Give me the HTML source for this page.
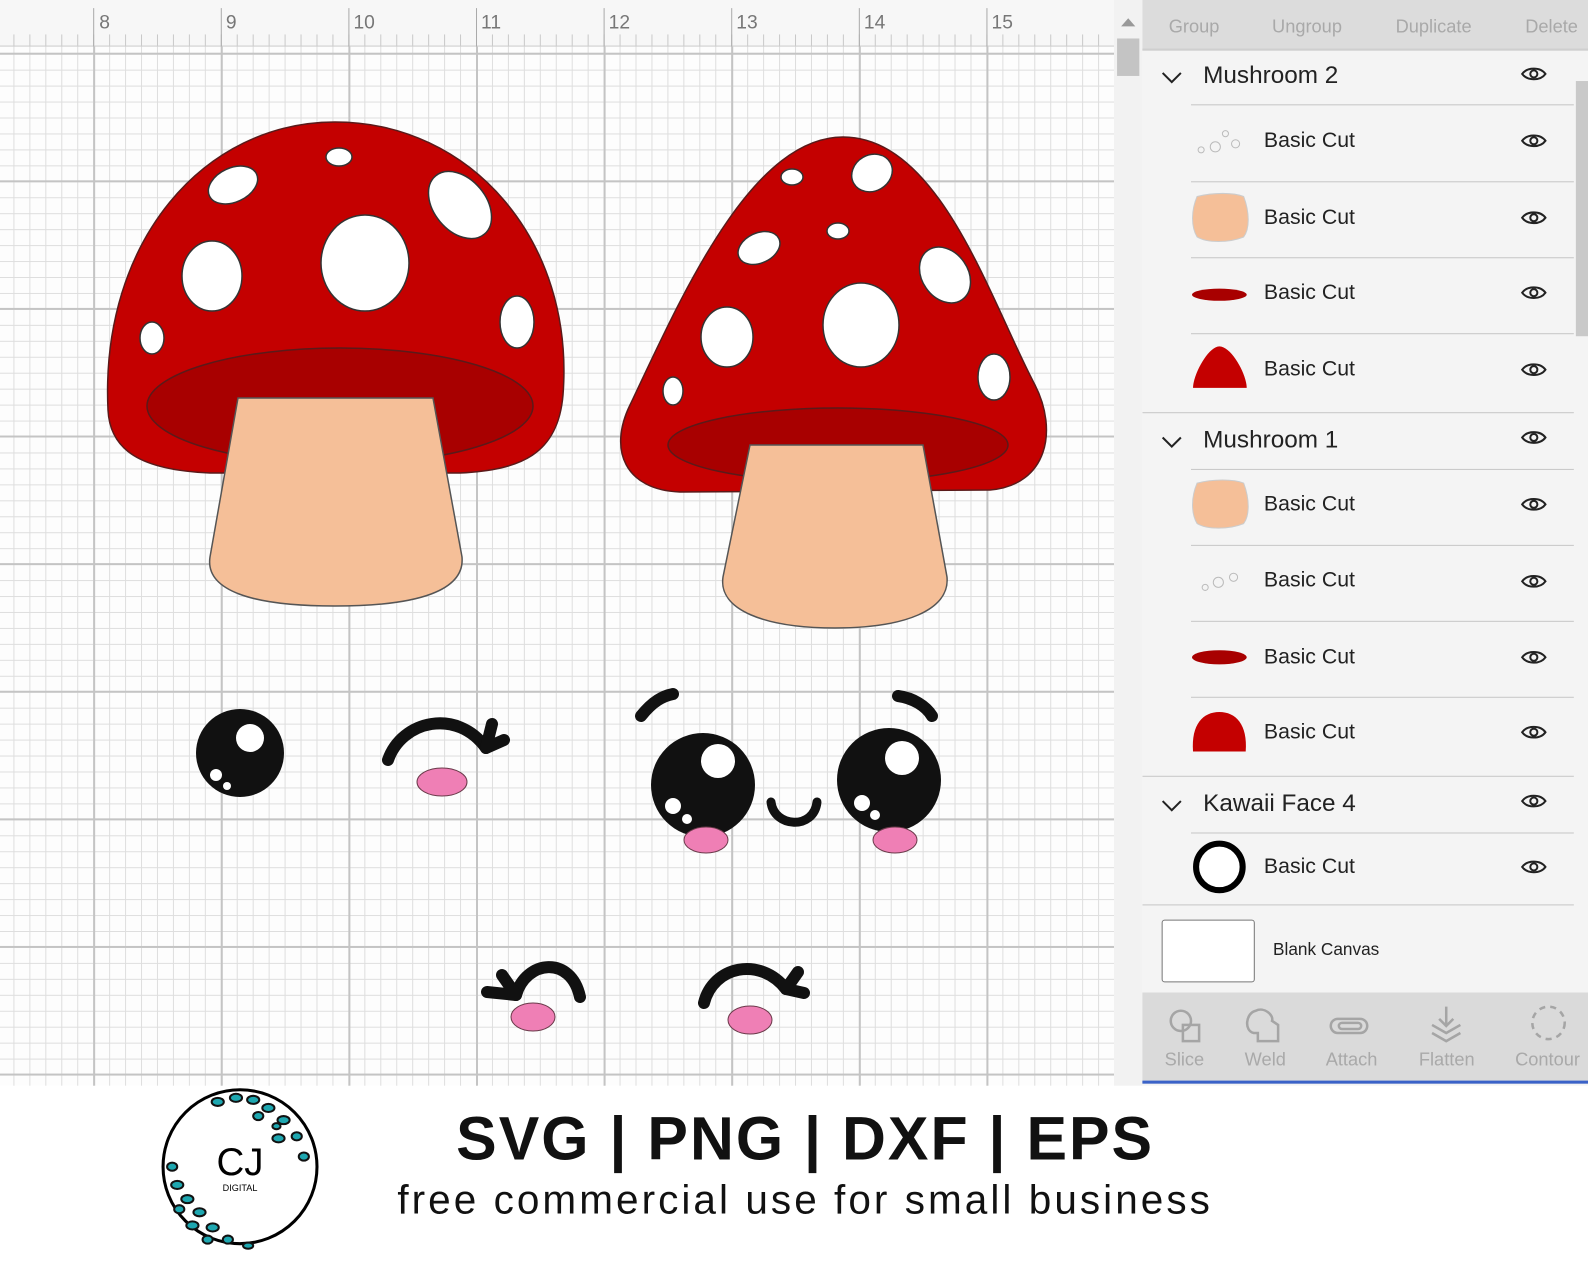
<!DOCTYPE html>
<html><head><meta charset="utf-8"><style>
*{margin:0;padding:0;box-sizing:border-box}
body{width:1588px;height:1270px;overflow:hidden;background:#fff;font-family:"Liberation Sans",sans-serif;position:relative}
#wrap{position:absolute;left:0;top:0;width:1568px;height:1254px;transform:scale(1.01276);transform-origin:0 0}
#canvas{position:absolute;left:0;top:0;width:1100px;height:1072px;background-color:#fdfdfd;
background-image:
linear-gradient(90deg,#c4c4c4 0 2px,transparent 2px),
linear-gradient(0deg,#c4c4c4 0 2px,transparent 2px),
linear-gradient(90deg,#dedede 0 1px,transparent 1px),
linear-gradient(0deg,#dedede 0 1px,transparent 1px);
background-size:126px 126px,126px 126px,15.75px 15.75px,15.75px 15.75px;
background-position:92px 54px,92px 54px,92px 54px,92px 54px}
#ruler{position:absolute;left:0;top:0;width:1100px;height:46px;background:#f7f7f7;border-bottom:1px solid #ccc;
background-image:linear-gradient(90deg,#c8c8c8 0 1px,transparent 1px);background-size:15.75px 12px;background-repeat:repeat-x;background-position:92px 34px}
#ruler span{position:absolute;top:12px;font-size:19px;color:#777}
#ruler i{position:absolute;top:8px;width:1px;height:38px;background:#aaa}
#vs{position:absolute;left:1100px;top:0;width:28px;height:1072px;background:#f2f2f2}
#panel{position:absolute;left:1128px;top:0;width:440px;height:1072px;background:#f4f4f4}
.tb{position:absolute;left:0;top:0;width:440px;height:50px;background:#dcdcdc;border-bottom:2px solid #cfcfcf}
.tb span,.bb span{position:absolute;font-size:18px;color:#a9a9a9}
.hd{font-size:24px;color:#222;position:absolute;left:60px}
.bc{font-size:21px;color:#222;position:absolute;left:120px}
.bb{position:absolute;left:0;top:980px;width:440px;height:90px;background:#dadada;border-bottom:3px solid #3a62c8}
</style></head><body><div id="wrap">
<div id="canvas"></div>
<div id="ruler">
<i style="left:92px"></i><span style="left:98px">8</span>
<i style="left:218px"></i><span style="left:223px">9</span>
<i style="left:344px"></i><span style="left:349px">10</span>
<i style="left:470px"></i><span style="left:475px">11</span>
<i style="left:596px"></i><span style="left:601px">12</span>
<i style="left:722px"></i><span style="left:727px">13</span>
<i style="left:848px"></i><span style="left:853px">14</span>
<i style="left:974px"></i><span style="left:979px">15</span>
</div>
<div id="vs"><div style="position:absolute;left:7px;top:18px;border-left:7px solid transparent;border-right:7px solid transparent;border-bottom:8px solid #999"></div><div style="position:absolute;left:3px;top:38px;width:22px;height:37px;background:#c4c4c4"></div></div>

<div id="panel">
<div class="tb">
<span style="left:26px;top:16px">Group</span>
<span style="left:128px;top:16px">Ungroup</span>
<span style="left:250px;top:16px">Duplicate</span>
<span style="left:378px;top:16px">Delete</span>
</div>
<svg style="position:absolute;left:0;top:0" width="440" height="1072">
<defs><g id="e"><path d="M375 0 C380 -7 393 -7 398 0 C393 7 380 7 375 0 Z"/><circle cx="386.5" cy="0" r="3.5"/></g></defs>
<g fill="none" stroke="#222" stroke-width="2">
<path d="M20 72 L29 81 L38 72"/><path d="M20 432 L29 441 L38 432"/><path d="M20 791 L29 800 L38 791"/>
<use href="#e" y="73"/><use href="#e" y="139"/><use href="#e" y="215"/><use href="#e" y="289"/><use href="#e" y="365"/>
<use href="#e" y="432"/><use href="#e" y="498"/><use href="#e" y="574"/><use href="#e" y="649"/><use href="#e" y="723"/>
<use href="#e" y="791"/><use href="#e" y="856"/>
</g>
<g fill="none" stroke="#bbb"><circle cx="72" cy="145" r="5"/><circle cx="82" cy="132" r="3"/><circle cx="58" cy="148" r="3"/><circle cx="92" cy="142" r="4"/><circle cx="62" cy="580" r="3"/><circle cx="75" cy="575" r="5"/><circle cx="90" cy="570" r="4"/></g>
<path d="M54 194 C70 190 90 190 100 194 C106 210 106 226 100 234 C85 240 64 240 54 234 C48 224 48 208 54 194 Z" fill="#f5bf98" stroke="#ccc"/>
<path d="M54 477 C70 473 90 473 100 477 C106 493 106 509 100 517 C85 523 64 523 54 517 C48 507 48 491 54 477 Z" fill="#f5bf98" stroke="#ccc"/>
<ellipse cx="76" cy="291" rx="27" ry="6" fill="#a80000"/>
<ellipse cx="76" cy="649" rx="27" ry="7" fill="#a80000"/>
<path d="M50 383 C50 370 65 342 76 342 C88 342 103 370 103 383 Z" fill="#c40000"/>
<path d="M50 742 C48 715 60 703 76 703 C92 703 104 715 102 742 Z" fill="#c40000"/>
<circle cx="76" cy="856" r="23" fill="#fff" stroke="#000" stroke-width="6"/>
<g fill="#c6c6c6">
<rect x="48" y="103" width="378" height="1"/><rect x="48" y="179" width="378" height="1"/><rect x="48" y="254" width="378" height="1"/><rect x="48" y="329" width="378" height="1"/>
<rect x="0" y="407" width="426" height="1"/><rect x="48" y="463" width="378" height="1"/><rect x="48" y="538" width="378" height="1"/><rect x="48" y="613" width="378" height="1"/><rect x="48" y="688" width="378" height="1"/>
<rect x="0" y="766" width="426" height="1"/><rect x="48" y="822" width="378" height="1"/><rect x="0" y="893" width="426" height="1"/>
</g>
<rect x="428" y="80" width="12" height="252" fill="#c9c9c9"/>
</svg>
<div class="hd" style="top:61px">Mushroom 2</div>
<div class="bc" style="top:127px">Basic Cut</div>
<div class="bc" style="top:203px">Basic Cut</div>
<div class="bc" style="top:277px">Basic Cut</div>
<div class="bc" style="top:353px">Basic Cut</div>
<div class="hd" style="top:421px">Mushroom 1</div>
<div class="bc" style="top:486px">Basic Cut</div>
<div class="bc" style="top:561px">Basic Cut</div>
<div class="bc" style="top:637px">Basic Cut</div>
<div class="bc" style="top:711px">Basic Cut</div>
<div class="hd" style="top:780px">Kawaii Face 4</div>
<div class="bc" style="top:844px">Basic Cut</div>
<div style="position:absolute;left:19px;top:908px;width:92px;height:62px;background:#fff;border:1px solid #777;border-radius:3px"></div>
<div style="position:absolute;left:129px;top:928px;font-size:17px;color:#222">Blank Canvas</div>
<div class="bb">
<svg style="position:absolute;left:0;top:0" width="440" height="60"><g fill="none" stroke="#a5a5a5" stroke-width="2.5">
<circle cx="38" cy="28" r="10"/><rect x="40" y="32" width="16" height="16"/>
<path d="M110 40 C100 38 102 20 112 18 C120 14 130 22 128 28 L134 32 L134 48 L114 48 L114 40 Z"/>
<rect x="186" y="26" width="36" height="14" rx="7"/><rect x="194" y="30" width="22" height="6" rx="3"/>
<path d="M300 14 L300 32 M293 26 L300 33 L307 26 M286 32 L300 40 L314 32 M286 40 L300 48 L314 40"/>
<circle cx="401" cy="30" r="16" stroke-dasharray="6 5"/>
</g></svg>
<span style="left:22px;top:56px">Slice</span>
<span style="left:101px;top:56px">Weld</span>
<span style="left:181px;top:56px">Attach</span>
<span style="left:273px;top:56px">Flatten</span>
<span style="left:368px;top:56px">Contour</span>
</div>
</div>

<svg style="position:absolute;left:155px;top:1072px" width="165" height="165" viewBox="0 0 165 165">
<circle cx="82" cy="80" r="76" fill="#fff" stroke="#000" stroke-width="3"/>
<g fill="#1ea7b0" stroke="#111" stroke-width="2">
<ellipse cx="60" cy="16" rx="6" ry="4"/><ellipse cx="78" cy="12" rx="6" ry="4"/><ellipse cx="95" cy="14" rx="6" ry="4"/><ellipse cx="110" cy="22" rx="6" ry="4"/><ellipse cx="125" cy="34" rx="6" ry="4"/><ellipse cx="100" cy="30" rx="5" ry="4"/><ellipse cx="120" cy="52" rx="6" ry="4"/><ellipse cx="138" cy="50" rx="5" ry="4"/><ellipse cx="145" cy="70" rx="5" ry="4"/><ellipse cx="118" cy="40" rx="4" ry="3"/>
<ellipse cx="15" cy="80" rx="5" ry="4"/><ellipse cx="20" cy="98" rx="6" ry="4"/><ellipse cx="30" cy="112" rx="6" ry="4"/><ellipse cx="22" cy="122" rx="5" ry="4"/><ellipse cx="42" cy="125" rx="6" ry="4"/><ellipse cx="35" cy="138" rx="6" ry="4"/><ellipse cx="55" cy="140" rx="6" ry="4"/><ellipse cx="50" cy="152" rx="5" ry="4"/><ellipse cx="70" cy="152" rx="5" ry="4"/><ellipse cx="90" cy="158" rx="5" ry="3"/>
</g>
<text x="82" y="88" text-anchor="middle" font-family="Liberation Sans" font-size="38" fill="#000">CJ</text>
<text x="82" y="104" text-anchor="middle" font-family="Liberation Sans" font-size="9" fill="#000">DIGITAL</text>
</svg>
<div style="position:absolute;left:380px;top:1090px;width:830px;text-align:center;font-size:60px;font-weight:bold;color:#111;letter-spacing:2px">SVG | PNG | DXF | EPS</div>
<div style="position:absolute;left:360px;top:1163px;width:870px;text-align:center;font-size:40px;color:#111;letter-spacing:3px">free commercial use for small business</div>
</div>

<svg style="position:absolute;left:0;top:0" width="1114" height="1085" viewBox="0 0 1114 1085">
<g stroke="#5a1a1a" stroke-width="1.5">
<path d="M108 410 C100 240 205 122 335 122 C470 122 575 240 563 395 C558 455 520 470 460 473 L210 473 C140 470 110 450 108 410 Z" fill="#c40000"/>
<ellipse cx="340" cy="406" rx="193" ry="58" fill="#a80000"/>
<g fill="#fff" stroke="#333">
<ellipse cx="339" cy="157" rx="13" ry="9"/>
<ellipse cx="233" cy="185" rx="26" ry="17" transform="rotate(-25 233 185)"/>
<ellipse cx="460" cy="205" rx="26" ry="38" transform="rotate(-40 460 205)"/>
<ellipse cx="365" cy="263" rx="44" ry="48"/>
<ellipse cx="212" cy="276" rx="30" ry="35"/>
<ellipse cx="152" cy="338" rx="12" ry="16"/>
<ellipse cx="517" cy="322" rx="17" ry="26"/>
</g>
<path d="M238 398 L433 398 L462 557 C465 590 420 606 335 606 C250 606 205 590 210 557 Z" fill="#f5bf98" stroke="#555"/>
<path d="M843 137 C940 137 990 300 1035 385 C1058 430 1048 485 990 490 L680 492 C625 490 608 450 630 405 C680 300 750 137 843 137 Z" fill="#c40000"/>
<ellipse cx="838" cy="445" rx="170" ry="37" fill="#a80000"/>
<g fill="#fff" stroke="#333">
<ellipse cx="792" cy="177" rx="11" ry="8"/>
<ellipse cx="872" cy="173" rx="21" ry="18" transform="rotate(-30 872 173)"/>
<ellipse cx="759" cy="248" rx="22" ry="15" transform="rotate(-25 759 248)"/>
<ellipse cx="838" cy="231" rx="11" ry="8"/>
<ellipse cx="945" cy="275" rx="23" ry="30" transform="rotate(-35 945 275)"/>
<ellipse cx="727" cy="337" rx="26" ry="30"/>
<ellipse cx="861" cy="325" rx="38" ry="42"/>
<ellipse cx="673" cy="391" rx="10" ry="14"/>
<ellipse cx="994" cy="377" rx="16" ry="23"/>
</g>
<path d="M750 445 L923 445 L947 577 C950 610 905 628 835 628 C765 628 718 610 723 577 Z" fill="#f5bf98" stroke="#555"/>
</g>
<circle cx="240" cy="753" r="44" fill="#111"/>
<circle cx="250" cy="738" r="14" fill="#fff"/>
<circle cx="216" cy="775" r="6" fill="#fff"/>
<circle cx="227" cy="786" r="4" fill="#fff"/>
<g fill="none" stroke="#111" stroke-width="12" stroke-linecap="round">
<path d="M388 760 C402 720 457 708 486 748"/>
<path d="M486 748 L492 724 M486 748 L504 740"/>
<path d="M641 716 C653 701 663 696 673 694"/>
<path d="M898 696 C913 698 926 706 932 716"/>
<path d="M771 802 C774 828 814 830 817 802" stroke-width="9"/>
<path d="M516 995 C526 960 571 955 580 997"/>
<path d="M516 995 L487 992 M516 995 L502 975"/>
<path d="M704 1003 C713 966 760 956 786 989"/>
<path d="M786 989 L798 972 M786 989 L804 993"/>
</g>
<circle cx="703" cy="785" r="52" fill="#111"/>
<circle cx="718" cy="761" r="17" fill="#fff"/>
<circle cx="673" cy="806" r="8" fill="#fff"/>
<circle cx="687" cy="819" r="5" fill="#fff"/>
<circle cx="889" cy="780" r="52" fill="#111"/>
<circle cx="902" cy="758" r="17" fill="#fff"/>
<circle cx="862" cy="803" r="8" fill="#fff"/>
<circle cx="875" cy="815" r="5" fill="#fff"/>
<g fill="#ef7fb5" stroke="#6a3a4a" stroke-width="1">
<ellipse cx="442" cy="782" rx="25" ry="14"/>
<ellipse cx="706" cy="840" rx="22" ry="13"/>
<ellipse cx="895" cy="840" rx="22" ry="13"/>
<ellipse cx="533" cy="1017" rx="22" ry="14"/>
<ellipse cx="750" cy="1020" rx="22" ry="14"/>
</g>
</svg>
</body></html>
